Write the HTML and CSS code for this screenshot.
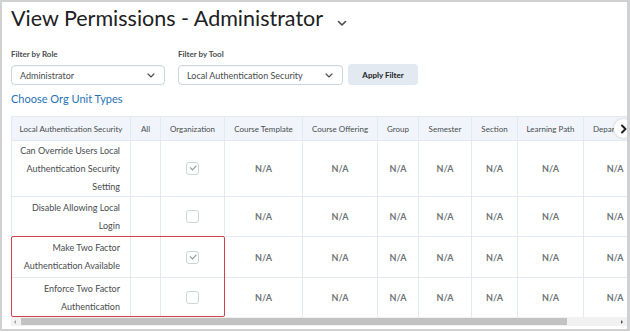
FILE: index.html
```html
<!DOCTYPE html>
<html lang="en">
<head>
  <meta charset="UTF-8" />
  <title>View Permissions - Administrator</title>
  <link rel="stylesheet" href="styles.css">
</head>
<body>
  <div class="frame">
    <h1 class="title">View Permissions - Administrator <span class="title-caret"><svg width="10" height="7" viewBox="0 0 10 7"><path d="M1.5 1.5 L5 5 L8.5 1.5" fill="none" stroke="#494c4e" stroke-width="1.6" stroke-linecap="round" stroke-linejoin="round"/></svg></span></h1>

    <div class="filters">
      <div class="filter">
        <label>Filter by Role</label>
        <div class="select role">Administrator
          <svg width="8" height="5" viewBox="0 0 8 5"><path d="M1 1 L4 4 L7 1" fill="none" stroke="#494c4e" stroke-width="1.2" stroke-linecap="round"/></svg>
        </div>
      </div>
      <div class="filter">
        <label>Filter by Tool</label>
        <div class="select tool">Local Authentication Security
          <svg width="8" height="5" viewBox="0 0 8 5"><path d="M1 1 L4 4 L7 1" fill="none" stroke="#494c4e" stroke-width="1.2" stroke-linecap="round"/></svg>
        </div>
      </div>
      <button class="apply">Apply Filter</button>
    </div>

    <a class="org-link" href="#">Choose Org Unit Types</a>

    <div class="table-wrap">
      <table class="perm">
        <colgroup>
          <col style="width:119px"><col style="width:30px"><col style="width:64px"><col style="width:78px"><col style="width:75px"><col style="width:41px"><col style="width:53px"><col style="width:46px"><col style="width:66px"><col style="width:44px">
        </colgroup>
        <thead>
          <tr>
            <th>Local Authentication Security</th><th>All</th><th>Organization</th><th>Course Template</th><th>Course Offering</th><th>Group</th><th>Semester</th><th>Section</th><th>Learning Path</th><th class="cut">Department</th>
          </tr>
        </thead>
        <tbody>
          <tr class="r1">
            <td class="name">Can Override Users Local Authentication Security Setting</td><td></td><td><span class="box checked"></span></td><td class="na">N/A</td><td class="na">N/A</td><td class="na">N/A</td><td class="na">N/A</td><td class="na">N/A</td><td class="na">N/A</td><td class="na">N/A</td>
          </tr>
          <tr class="r2">
            <td class="name">Disable Allowing Local Login</td><td></td><td><span class="box"></span></td><td class="na">N/A</td><td class="na">N/A</td><td class="na">N/A</td><td class="na">N/A</td><td class="na">N/A</td><td class="na">N/A</td><td class="na">N/A</td>
          </tr>
          <tr class="r3">
            <td class="name">Make Two Factor Authentication Available</td><td></td><td><span class="box checked"></span></td><td class="na">N/A</td><td class="na">N/A</td><td class="na">N/A</td><td class="na">N/A</td><td class="na">N/A</td><td class="na">N/A</td><td class="na">N/A</td>
          </tr>
          <tr class="r4">
            <td class="name">Enforce Two Factor Authentication</td><td></td><td><span class="box"></span></td><td class="na">N/A</td><td class="na">N/A</td><td class="na">N/A</td><td class="na">N/A</td><td class="na">N/A</td><td class="na">N/A</td><td class="na">N/A</td>
          </tr>
        </tbody>
      </table>
      <div class="highlight"></div>
      <div class="scroll-next"><svg width="8" height="10" viewBox="0 0 8 10"><path d="M2 1.5 L5.5 5 L2 8.5" fill="none" stroke="#202122" stroke-width="2" stroke-linecap="round" stroke-linejoin="round"/></svg></div>
      <div class="scrollbar">
        <span class="arrow left"></span>
        <div class="thumb"></div>
        <span class="arrow right"></span>
      </div>
    </div>
  </div>
</body>
</html>
```

FILE: styles.css
```css
html, body {
  margin: 0;
  padding: 0;
  background: #fff;
}

.frame {
  width: 630px;
  height: 331px;
  box-sizing: border-box;
  border: 2px solid #cfd1d3;
  border-right-width: 3px;
  padding: 0 0 0 9px;
  font-family: Lato, "Open Sans", sans-serif;
  color: #202122;
  overflow: hidden;
}

.title {
  margin: 0;
  padding-top: 2px;
  font-size: 21.5px;
  font-weight: 400;
  line-height: 29px;
  color: #202122;
  white-space: nowrap;
}

.title-caret {
  display: inline-block;
  margin-left: 9px;
  vertical-align: -1px;
}

.filters {
  display: flex;
  align-items: flex-end;
  margin-top: 15px;
}

.filter {
  display: flex;
  flex-direction: column;
  margin-right: 13px;
}

.filter:nth-child(2) {
  margin-right: 5px;
}

.filter label {
  font-size: 8px;
  font-weight: 700;
  color: #494c4e;
  margin-bottom: 6px;
}

.select {
  height: 20px;
  box-sizing: border-box;
  border: 1px solid #cdd5dc;
  border-radius: 4px;
  display: flex;
  align-items: center;
  justify-content: space-between;
  padding: 0 9px 0 8px;
  font-size: 9px;
  color: #494c4e;
  box-shadow: inset 0 1px 1px rgba(0,0,0,0.03);
}

.select.role {
  width: 154px;
}

.select.tool {
  width: 165px;
}

.apply {
  height: 21px;
  width: 70px;
  border: none;
  border-radius: 4px;
  background: #e3e9f1;
  font-family: inherit;
  font-size: 8px;
  font-weight: 700;
  color: #202122;
  padding: 0;
}

.org-link {
  display: block;
  margin-top: 7px;
  font-size: 11px;
  color: #1f73b7;
  text-decoration: none;
  line-height: 14px;
}

.table-wrap {
  position: relative;
  margin-top: 10px;
  height: 211px;
  overflow: hidden;
}

.perm {
  border-collapse: collapse;
  table-layout: fixed;
  width: 616px;
  font-size: 8px;
  color: #494c4e;
}

.perm th,
.perm td {
  border: 1px solid #e3e9f1;
  text-align: center;
  padding: 0;
}

.perm th {
  background: #f1f5fb;
  height: 23px;
  font-weight: 400;
  white-space: nowrap;
  overflow: hidden;
}

.perm th.cut {
  text-align: left;
  padding-left: 9px;
  border-right: none;
}

.perm td.name {
  text-align: right;
  padding: 0 10px 0 4px;
  font-size: 9px;
  line-height: 18px;
  color: #494c4e;
}

.perm td.na {
  font-size: 9px;
  font-weight: 700;
  color: #6e7376;
}

.perm td.na:last-child {
  text-align: right;
  padding-right: 4px;
  border-right: none;
}

.r1 td { height: 55px; }
.r2 td { height: 39px; }
.r3 td { height: 40px; }
.r4 td { height: 39px; }

.box {
  display: inline-block;
  width: 11px;
  height: 11px;
  border: 1px solid #cdd5dc;
  border-radius: 3px;
  vertical-align: middle;
  position: relative;
  background: #fff;
}

.box.checked::after {
  content: "";
  position: absolute;
  left: 3px;
  top: 2px;
  width: 5px;
  height: 2.5px;
  border-left: 1px solid #8a8f93;
  border-bottom: 1px solid #8a8f93;
  transform: rotate(-45deg);
}

.highlight {
  position: absolute;
  left: 0;
  top: 120px;
  width: 212px;
  height: 79px;
  border: 1.5px solid #d0414f;
  border-radius: 2px;
}

.scroll-next {
  position: absolute;
  right: -6px;
  top: 3px;
  width: 19px;
  height: 19px;
  border-radius: 50%;
  background: #fff;
  box-shadow: 0 0 3px rgba(0,0,0,0.2);
  display: flex;
  align-items: center;
  justify-content: center;
}

.scrollbar {
  position: absolute;
  left: 0;
  right: 0;
  top: 201px;
  height: 9px;
  background: #f1f1f1;
  display: flex;
  align-items: center;
}

.scrollbar .thumb {
  position: absolute;
  left: 10px;
  width: 546px;
  top: 1px;
  bottom: 1px;
  background: #c2c2c2;
}

.arrow {
  position: absolute;
  width: 0;
  height: 0;
  border-top: 2px solid transparent;
  border-bottom: 2px solid transparent;
}

.arrow.left {
  left: 3px;
  border-right: 2px solid #a0a0a0;
}

.arrow.right {
  right: 4px;
  border-left: 2px solid #505050;
}
```
